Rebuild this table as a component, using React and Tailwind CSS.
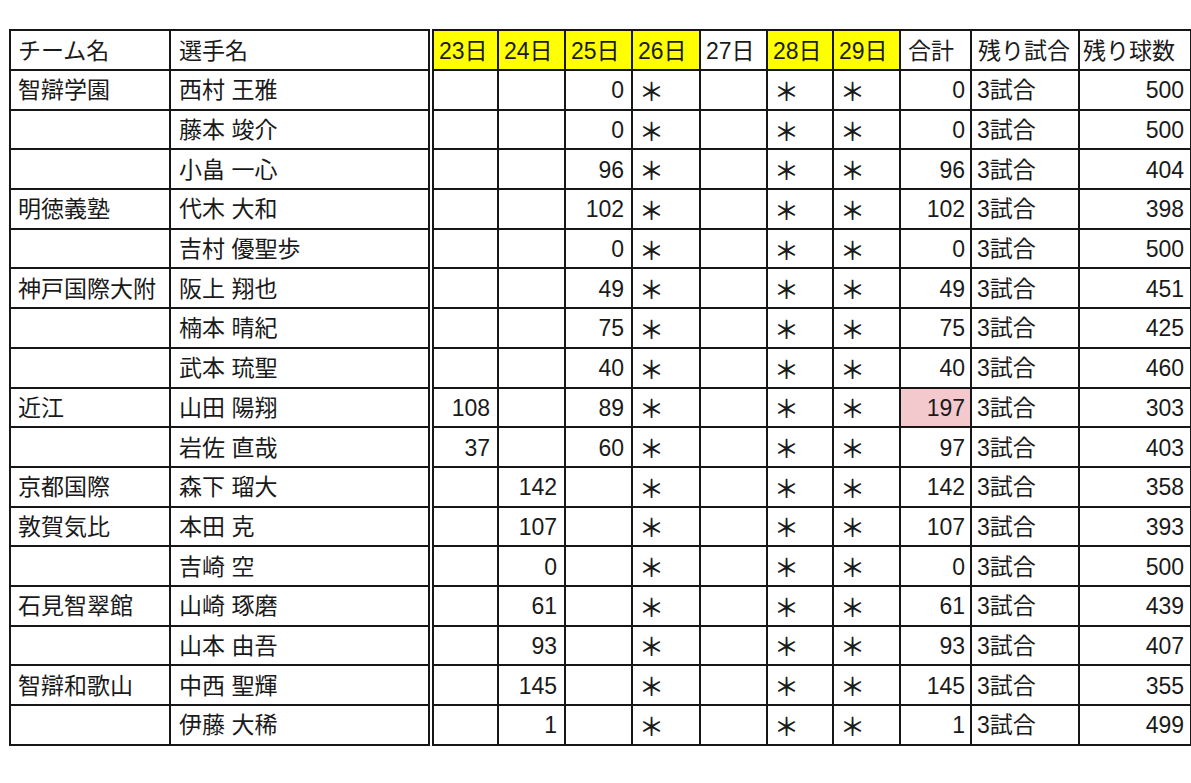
import React from "react";

const DAYS = ["23日", "24日", "25日", "26日", "27日", "28日", "29日"];
const YELLOW = { "23日": true, "24日": true, "25日": true, "26日": true, "28日": true, "29日": true };

// [team, player, d23, d24, d25, total, remaining balls]
const ROWS = [
  ["智辯学園", "西村 王雅", "", "", "0", "0", "500"],
  ["", "藤本 竣介", "", "", "0", "0", "500"],
  ["", "小畠 一心", "", "", "96", "96", "404"],
  ["明徳義塾", "代木 大和", "", "", "102", "102", "398"],
  ["", "吉村 優聖歩", "", "", "0", "0", "500"],
  ["神戸国際大附", "阪上 翔也", "", "", "49", "49", "451"],
  ["", "楠本 晴紀", "", "", "75", "75", "425"],
  ["", "武本 琉聖", "", "", "40", "40", "460"],
  ["近江", "山田 陽翔", "108", "", "89", "197", "303"],
  ["", "岩佐 直哉", "37", "", "60", "97", "403"],
  ["京都国際", "森下 瑠大", "", "142", "", "142", "358"],
  ["敦賀気比", "本田 克", "", "107", "", "107", "393"],
  ["", "吉崎 空", "", "0", "", "0", "500"],
  ["石見智翠館", "山崎 琢磨", "", "61", "", "61", "439"],
  ["", "山本 由吾", "", "93", "", "93", "407"],
  ["智辯和歌山", "中西 聖輝", "", "145", "", "145", "355"],
  ["", "伊藤 大稀", "", "1", "", "1", "499"],
];

const cell = "border-2 border-[#161616] p-0 pt-[2px] align-middle whitespace-nowrap overflow-hidden";
const playerCell = "border-2 border-r-[6px] border-r-[#161616] border-double border-[#161616] p-0 pt-[2px] align-middle whitespace-nowrap overflow-hidden";
const star = <span className="inline-block pl-[6px] pt-[3px] text-[25px] font-medium">＊</span>;

export default function App() {
  return (
    <div
      className="min-h-screen w-full bg-white pt-[29px] pl-[9px] text-[#1a1a1a]"
      style={{ fontFamily: '"Liberation Sans", "Noto Sans CJK JP", sans-serif' }}
    >
      <table className="table-fixed border-collapse w-[1181px] text-[23px] leading-none">
        <colgroup>
          <col className="w-[160px]" />
          <col className="w-[261px]" />
          <col className="w-[67px]" />
          <col className="w-[67px]" />
          <col className="w-[67px]" />
          <col className="w-[68px]" />
          <col className="w-[67px]" />
          <col className="w-[66px]" />
          <col className="w-[67px]" />
          <col className="w-[71px]" />
          <col className="w-[108px]" />
          <col className="w-[112px]" />
        </colgroup>
        <thead>
          <tr className="h-[40px]">
            <th className={`${cell} text-left font-normal pl-[7px]`}>チーム名</th>
            <th className={`${playerCell} text-left font-normal pl-[8px]`}>選手名</th>
            {DAYS.map((d) => (
              <th
                key={d}
                className={`${cell} text-left font-normal pl-[5px] ${YELLOW[d] ? "bg-[#ffff00]" : "bg-white"}`}
              >
                {d}
              </th>
            ))}
            <th className={`${cell} text-left font-normal pl-[7px]`}>合計</th>
            <th className={`${cell} text-left font-normal pl-[6px]`}>残り試合</th>
            <th className={`${cell} text-left font-normal pl-[3px]`}>残り球数</th>
          </tr>
        </thead>
        <tbody>
          {ROWS.map((r, i) => (
            <tr key={i} className="h-[39.7px]">
              <td className={`${cell} pl-[7px]`}>{r[0]}</td>
              <td className={`${playerCell} pl-[8px]`}>{r[1]}</td>
              <td className={`${cell} text-right pr-[7px]`}>{r[2]}</td>
              <td className={`${cell} text-right pr-[7px]`}>{r[3]}</td>
              <td className={`${cell} text-right pr-[7px]`}>{r[4]}</td>
              <td className={cell}>{star}</td>
              <td className={cell}></td>
              <td className={cell}>{star}</td>
              <td className={cell}>{star}</td>
              <td className={`${cell} text-right pr-[5px] ${r[5] === "197" ? "bg-[#f4c9cd]" : ""}`}>{r[5]}</td>
              <td className={`${cell} pl-[5px]`}>3試合</td>
              <td className={`${cell} text-right pr-[6px]`}>{r[6]}</td>
            </tr>
          ))}
        </tbody>
      </table>
    </div>
  );
}
